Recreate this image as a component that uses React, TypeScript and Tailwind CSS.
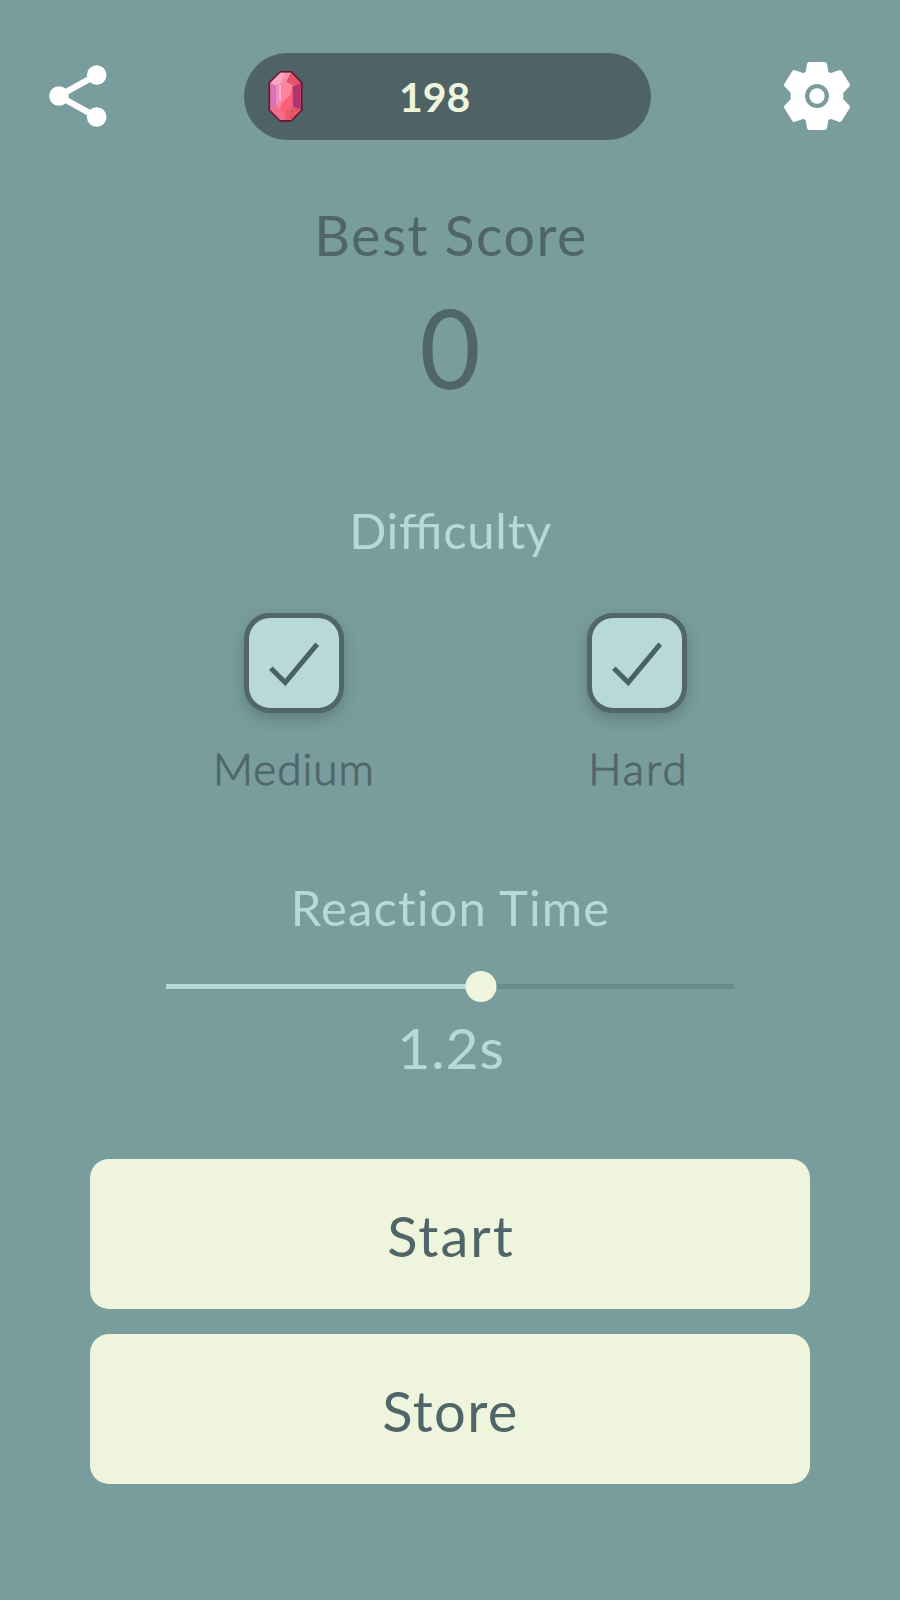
import { useState } from 'react';

function ShareIcon() {
  return (
    <svg className="mb-[2px] h-[66px] w-[62px]" viewBox="0 0 62 66" fill="#fff">
      <path d="M49.7 12 11.7 33l38 21" fill="none" stroke="#fff" strokeWidth="6.2" />
      <circle cx="12" cy="33" r="9.8" />
      <circle cx="49.7" cy="12" r="9.8" />
      <circle cx="49.7" cy="54" r="9.8" />
    </svg>
  );
}

function GearIcon() {
  return (
    <svg className="mb-[2px] h-[72px] w-[70px]" viewBox="0 0 210 216">
      <path
        d="M82 13h46l5 27 12 7 28-10 24 38-20 21v24l20 21-24 38-28-10-12 7-5 27H82l-5-27-12-7-28 10-24-38 20-21V96L13 75l24-38 28 10 12-7z"
        fill="#fff"
        stroke="#fff"
        strokeWidth="14"
        strokeLinejoin="round"
      />
      <circle cx="105" cy="108" r="29.5" fill="none" stroke="#799c9d" strokeWidth="13" />
    </svg>
  );
}

function GemIcon() {
  return (
    <svg className="mb-[1px] h-[53px] w-[37px]" viewBox="0 0 108 156">
      <path d="M38 3h34l32 33v83l-32 33H38L4 119V36z" fill="#64172c" />
      <path d="M39 8h31l29 30v79l-29 30H39L9 117V38z" fill="#fb6279" />
      <path d="M39 8h16L41 40 24 48 9 38z" fill="#f7a7c4" />
      <path d="M55 8h15l10 34-18-8-21 6z" fill="#fb8f9d" />
      <path d="m70 8 29 30-23 7-21-8z" fill="#e5506c" />
      <path d="M9 38l17 8v60L9 117z" fill="#dc72b1" />
      <path d="m26 46 15-8 19-2 15 9-4 26-20 18-14 25-11-8z" fill="#ff849b" />
      <path d="M26 46l15-8v48l-15 20z" fill="#ee8bc2" />
      <path d="M36 44h4v45h-4z" fill="#ffc3d8" />
      <path d="M99 38 75 48v60l24 9z" fill="#b33473" />
      <path d="m75 48-7 27-24 20-6 20 20 6 17-13z" fill="#fa6079" />
      <path d="m9 117 17-11 16 14 12 27H39z" fill="#f26e91" />
      <path d="m75 108 24 9-29 30H54l4-26z" fill="#e65a6c" />
      <path d="M72 121h4v4h-4zM84 115h4v4h-4zM78 132h4v4h-4zM68 137h4v4h-4z" fill="#b33558" />
    </svg>
  );
}

interface LevelProps {
  label: string;
  labelClass: string;
  checked: boolean;
  onToggle: () => void;
}

function Level({ label, labelClass, checked, onToggle }: LevelProps) {
  return (
    <div className="flex w-[200px] flex-col items-center">
      <button
        role="checkbox"
        aria-checked={checked}
        aria-label={label}
        onClick={onToggle}
        className="flex h-[100px] w-[100px] items-center justify-center rounded-[26px] border-[5px] border-[#506668] bg-[#b8d9d8] shadow-[0_6px_14px_rgba(60,85,88,0.4)]"
      >
        {checked && (
          <svg className="h-[90px] w-[90px]" viewBox="0 0 90 90" fill="none" stroke="#4b6264" strokeWidth="5">
            <path d="m21.8 50.2 14.4 14.3 32-38.3" />
          </svg>
        )}
      </button>
      <span
        className={`mt-[30px] text-[44px] font-light leading-[50px] text-[#506668] [-webkit-text-stroke:1px_#506668] ${labelClass}`}
      >
        {label}
      </span>
    </div>
  );
}

export default function App() {
  const [medium, setMedium] = useState(true);
  const [hard, setHard] = useState(true);
  const progress = 55.5;

  return (
    <main className="flex h-[1600px] w-[900px] flex-col overflow-hidden bg-[#799c9d] font-[Lato,sans-serif] text-[#506568]">
      <header className="mt-[53px] flex h-[87px] items-center justify-between pl-[47px] pr-[48px]">
        <button aria-label="Share">
          <ShareIcon />
        </button>
        <div className="ml-[4px] flex h-[87px] w-[407px] items-center rounded-full bg-[#4f6266] pl-[23px]">
          <GemIcon />
          <span className="ml-[95px] text-[41px] font-bold leading-[50px] text-[#edf5dc]">198</span>
        </div>
        <button aria-label="Settings">
          <GearIcon />
        </button>
      </header>

      <section className="mt-[65px] text-center">
        <h2 className="pl-[2px] text-[55.5px] leading-[60px] tracking-[1.5px]">Best Score</h2>
        <p className="mt-[21px] scale-x-95 text-[111px] leading-[120px]">0</p>
      </section>

      <section className="mt-[94px] text-center text-[#b7d9d9]">
        <h2 className="pl-[1px] text-[49px] leading-[60px] tracking-[0.7px] [font-feature-settings:'liga']">
          Difficulty
        </h2>
        <div className="mt-[53px] flex gap-[143px] pl-[194px]">
          <Level label="Medium" labelClass="tracking-[1px]" checked={medium} onToggle={() => setMedium(!medium)} />
          <Level label="Hard" labelClass="pl-[3px] tracking-[2px]" checked={hard} onToggle={() => setHard(!hard)} />
        </div>
      </section>

      <section className="mt-[84px] text-center text-[#b7d9d9]">
        <h2 className="pl-[1px] text-[49px] leading-[60px] tracking-[1.1px]">Reaction Time</h2>
        <div className="mx-[166px] mt-[34px] flex h-[31px] items-center">
          <div className="relative h-[5px] w-full bg-[#698c8d]">
            <div className="h-full bg-[#b7d9d9]" style={{ width: `${progress}%` }} />
            <div
              className="absolute -top-[13px] h-[31px] w-[31px] -translate-x-1/2 rounded-full bg-[#eef5dc]"
              style={{ left: `${progress}%` }}
            />
          </div>
        </div>
        <p className="mt-[15px] pl-[2px] text-[57px] leading-[60px] tracking-[0.8px]">1.2s</p>
      </section>

      <nav className="mx-[90px] mt-[82px] flex flex-col gap-[25px]">
        <button className="h-[150px] rounded-[19px] bg-[#eef5dc] pl-[2px] pt-1 text-[56px] leading-[60px] tracking-[2px]">
          Start
        </button>
        <button className="h-[150px] rounded-[19px] bg-[#eef5dc] pl-[1px] pt-1 text-[56px] leading-[60px] tracking-[1.4px]">
          Store
        </button>
      </nav>
    </main>
  );
}
